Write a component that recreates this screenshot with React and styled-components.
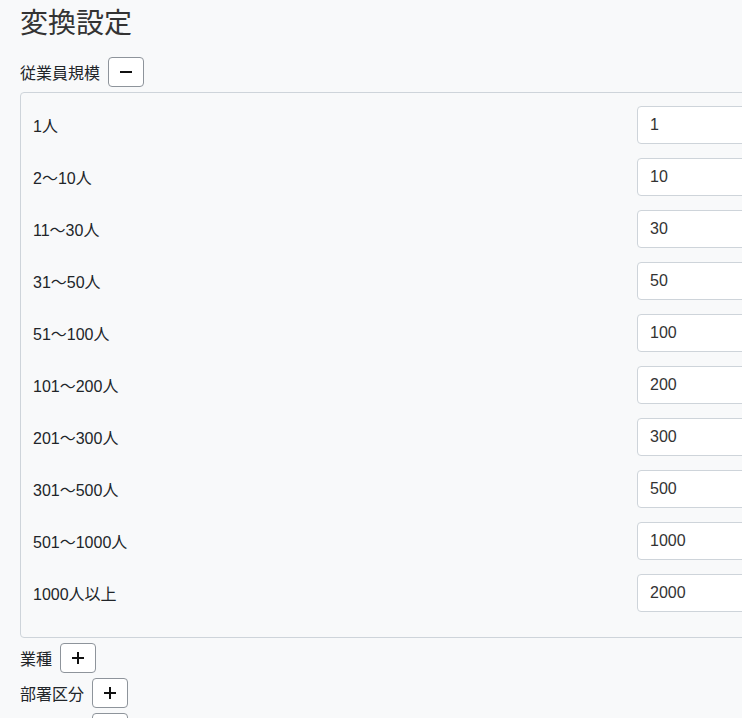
import React from 'react';
import styled, { createGlobalStyle } from 'styled-components';

const PAGE_BG = '#f8f9fa';
const TEXT = '#212529';
const BORDER = '#ced4da';

const GlobalStyle = createGlobalStyle`
  body {
    margin: 0;
    background: ${PAGE_BG};
    color: ${TEXT};
    font-family: "Liberation Sans", "Noto Sans CJK JP", sans-serif;
    overflow: hidden;
  }
`;

const Page = styled.div`
  width: 850px;
  padding: 0 20px;
`;

const Title = styled.h2`
  margin: 0;
  padding-top: 4px;
  font-size: 28px;
  font-weight: 400;
  line-height: 40px;
  color: #333;
`;

const Group = styled.div`
  display: flex;
  flex-direction: column;
`;

const GroupHead = styled.div`
  display: flex;
  align-items: center;
  gap: 8px;
  height: 30px;
  margin-top: ${(p) => p.$top}px;
  font-size: 16px;
`;

const ToggleButton = styled.button`
  width: 36px;
  height: 30px;
  padding: 0;
  display: flex;
  align-items: center;
  justify-content: center;
  background: #fff;
  border: 1px solid #8e949b;
  border-radius: 4px;
  color: #111;
`;

const Panel = styled.div`
  margin-top: 5px;
  border: 1px solid ${BORDER};
  border-radius: 4px;
  background: ${PAGE_BG};
  padding: 13px 12px 11px;
`;

const Row = styled.div`
  display: flex;
  align-items: center;
  justify-content: space-between;
  margin-bottom: 14px;
  font-size: 16px;
`;

const NumberInput = styled.input`
  box-sizing: border-box;
  width: 220px;
  height: 38px;
  padding: 0 12px;
  border: 1px solid ${BORDER};
  border-radius: 4px;
  background: #fff;
  color: #333;
  font-size: 16px;
  font-family: "Liberation Sans", sans-serif;
`;

const Icon = ({ plus }) => (
  <svg width="14" height="14" viewBox="0 0 14 14">
    <path d="M1 7h12" stroke="currentColor" strokeWidth="2" />
    {plus && <path d="M7 1v12" stroke="currentColor" strokeWidth="2" />}
  </svg>
);

const SIZES = [
  ['1人', 1],
  ['2〜10人', 10],
  ['11〜30人', 30],
  ['31〜50人', 50],
  ['51〜100人', 100],
  ['101〜200人', 200],
  ['201〜300人', 300],
  ['301〜500人', 500],
  ['501〜1000人', 1000],
  ['1000人以上', 2000],
];

const App = () => (
  <Page>
    <GlobalStyle />
    <Title>変換設定</Title>
    <Group>
      <GroupHead $top={13}>
        従業員規模
        <ToggleButton><Icon /></ToggleButton>
      </GroupHead>
      <Panel>
        {SIZES.map(([label, value]) => (
          <Row key={label}>
            <span>{label}</span>
            <NumberInput defaultValue={value} />
          </Row>
        ))}
      </Panel>
    </Group>
    <GroupHead $top={5}>
      業種
      <ToggleButton><Icon plus /></ToggleButton>
    </GroupHead>
    <GroupHead $top={5}>
      部署区分
      <ToggleButton><Icon plus /></ToggleButton>
    </GroupHead>
    <GroupHead $top={5}>
      役職区分
      <ToggleButton><Icon plus /></ToggleButton>
    </GroupHead>
  </Page>
);

export default App;
